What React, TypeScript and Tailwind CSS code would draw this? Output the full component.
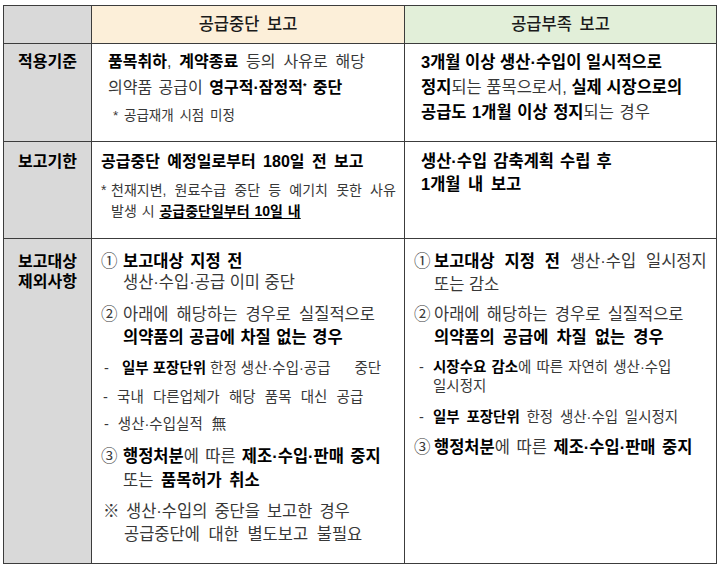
import React from "react";

const B = ({ children }: { children: React.ReactNode }) => (
  <span className="font-bold text-black">{children}</span>
);

const cell = "border-r border-b border-[#3c3c3c]";

export default function App() {
  return (
    <div className="w-[720px] h-[568px] bg-white pt-[5px] pl-[3px] font-['Liberation_Sans','Noto_Sans_CJK_KR',sans-serif] text-[#383838]">
      <div className="grid w-fit grid-cols-[88px_313px_312px] grid-rows-[38px_98px_97px_325px] border-l border-t border-[#3c3c3c]">
        {/* header */}
        <div className={`${cell} bg-[#d9d9d9]`} />
        <div className={`${cell} bg-[#fcefd9] flex items-center justify-center text-[16.5px] font-medium text-[#1a1a1a] [word-spacing:3px]`}>
          공급중단 보고
        </div>
        <div className={`${cell} bg-[#e2efd9] flex items-center justify-center text-[16.5px] font-medium text-[#1a1a1a] [word-spacing:3px]`}>
          공급부족 보고
        </div>

        {/* row 1 */}
        <div className={`${cell} bg-[#d9d9d9] pt-[5px] text-center text-[16px] leading-[26px] font-bold text-black`}>
          적용기준
        </div>
        <div className={`${cell} pt-[5px] pl-[16px] text-[16px]`}>
          <div className="leading-[26px] whitespace-nowrap [word-spacing:3.5px]">
            <B>품목취하</B>, <B>계약종료</B> 등의 사유로 해당
          </div>
          <div className="leading-[26px] whitespace-nowrap [word-spacing:2px]">
            의약품 공급이 <B>영구적·잠정적</B>
            <sup className="font-bold text-black text-[9px]">*</sup> <B>중단</B>
          </div>
          <div className="mt-[4px] pl-[5px] leading-[22px] text-[13.5px] whitespace-nowrap [word-spacing:2px]">
            * 공급재개 시점 미정
          </div>
        </div>
        <div className={`${cell} pt-[6px] pl-[16px] text-[16.5px] leading-[25px]`}>
          <div className="whitespace-nowrap">
            <B>3개월 이상 생산·수입이 일시적으로</B>
          </div>
          <div className="whitespace-nowrap">
            <B>정지</B>되는 품목으로서, <B>실제 시장으로의</B>
          </div>
          <div className="whitespace-nowrap [word-spacing:1px]">
            <B>공급도 1개월 이상 정지</B>되는 경우
          </div>
        </div>

        {/* row 2 */}
        <div className={`${cell} bg-[#d9d9d9] pt-[7px] text-center text-[16px] leading-[26px] font-bold text-black`}>
          보고기한
        </div>
        <div className={`${cell} pt-[7px] pl-[9px]`}>
          <div className="text-[16px] leading-[26px] font-bold text-black whitespace-nowrap [word-spacing:3px]">
            공급중단 예정일로부터 180일 전 보고
          </div>
          <div className="mt-[5px] flex text-[14px] leading-[21px]">
            <span className="w-[10px] shrink-0">*</span>
            <div>
              <div className="whitespace-nowrap [word-spacing:4.3px]">천재지변, 원료수급 중단 등 예기치 못한 사유</div>
              <div className="whitespace-nowrap [word-spacing:1px]">
                발생 시 <span className="font-bold text-black underline underline-offset-2">공급중단일부터 10일 내</span>
              </div>
            </div>
          </div>
        </div>
        <div className={`${cell} pt-[8px] pl-[16px] text-[16.5px] leading-[23px] font-bold text-black`}>
          <div className="whitespace-nowrap [word-spacing:1.5px]">생산·수입 감축계획 수립 후</div>
          <div className="whitespace-nowrap [word-spacing:3px]">1개월 내 보고</div>
        </div>

        {/* row 3 */}
        <div className={`${cell} bg-[#d9d9d9] pt-[13px] text-center text-[16px] leading-[20px] font-bold text-black`}>
          <div>보고대상</div>
          <div>제외사항</div>
        </div>
        <div className={`${cell} pt-[12px] pl-[9px] text-[16.5px]`}>
          <div className="flex leading-[21px]">
            <span className="w-[22px] shrink-0">①</span>
            <div>
              <div className="whitespace-nowrap [word-spacing:2px]"><B>보고대상 지정 전</B></div>
              <div className="whitespace-nowrap">생산·수입·공급 이미 중단</div>
            </div>
          </div>
          <div className="mt-[10px] flex leading-[23px]">
            <span className="w-[22px] shrink-0">②</span>
            <div>
              <div className="whitespace-nowrap [word-spacing:3.5px]">아래에 해당하는 경우로 실질적으로</div>
              <div className="whitespace-nowrap [word-spacing:1px]"><B>의약품의 공급에 차질 없는 경우</B></div>
            </div>
          </div>
          <div className="mt-[7px] ml-[3px] flex leading-[24px] text-[14.5px]">
            <span className="w-[18px] shrink-0">-</span>
            <div className="whitespace-nowrap">
              <B>일부 포장단위</B> 한정 생산·수입·공급<span className="inline-block w-[24px]" />중단
            </div>
          </div>
          <div className="mt-[5px] ml-[2px] leading-[24px] text-[14.5px] whitespace-nowrap [word-spacing:5.2px]">
            - 국내 다른업체가 해당 품목 대신 공급
          </div>
          <div className="mt-[3px] ml-[3px] leading-[24px] text-[14.5px] whitespace-nowrap [word-spacing:5px]">
            - 생산·수입실적 無
          </div>
          <div className="mt-[8px] flex leading-[24px]">
            <span className="w-[22px] shrink-0">③</span>
            <div>
              <div className="whitespace-nowrap [word-spacing:1.7px]"><B>행정처분</B>에 따른 <B>제조·수입·판매 중지</B></div>
              <div className="whitespace-nowrap [word-spacing:3px]">또는 <B>품목허가 취소</B></div>
            </div>
          </div>
          <div className="mt-[8px] ml-[2px] flex leading-[23px]">
            <span className="w-[23px] shrink-0">※</span>
            <div>
              <div className="whitespace-nowrap [word-spacing:2.4px]">생산·수입의 중단을 보고한 경우</div>
              <div className="whitespace-nowrap [word-spacing:4px] -ml-[2px]">공급중단에 대한 별도보고 불필요</div>
            </div>
          </div>
        </div>
        <div className={`${cell} pt-[11px] pl-[9px] text-[16.5px]`}>
          <div className="flex leading-[23px]">
            <span className="w-[20px] shrink-0">①</span>
            <div>
              <div className="whitespace-nowrap [word-spacing:5.3px]"><B>보고대상 지정 전</B> 생산·수입 일시정지</div>
              <div className="whitespace-nowrap">또는 감소</div>
            </div>
          </div>
          <div className="mt-[7px] flex leading-[23px]">
            <span className="w-[20px] shrink-0">②</span>
            <div>
              <div className="whitespace-nowrap [word-spacing:2.7px]">아래에 해당하는 경우로 실질적으로</div>
              <div className="whitespace-nowrap [word-spacing:3.5px]"><B>의약품의 공급에 차질 없는 경우</B></div>
            </div>
          </div>
          <div className="mt-[9px] ml-[5px] flex text-[14.5px] leading-[19px]">
            <span className="w-[14px] shrink-0">-</span>
            <div>
              <div className="whitespace-nowrap [word-spacing:1px]"><B>시장수요 감소</B>에 따른 자연히 생산·수입</div>
              <div className="whitespace-nowrap">일시정지</div>
            </div>
          </div>
          <div className="mt-[10px] ml-[5px] flex text-[14.5px] leading-[22px]">
            <span className="w-[14px] shrink-0">-</span>
            <div className="whitespace-nowrap [word-spacing:2.7px]">
              <B>일부 포장단위</B> 한정 생산·수입 일시정지
            </div>
          </div>
          <div className="mt-[7px] flex leading-[24px]">
            <span className="w-[20px] shrink-0">③</span>
            <div className="whitespace-nowrap [word-spacing:2px]"><B>행정처분</B>에 따른 <B>제조·수입·판매 중지</B></div>
          </div>
        </div>
      </div>
    </div>
  );
}
